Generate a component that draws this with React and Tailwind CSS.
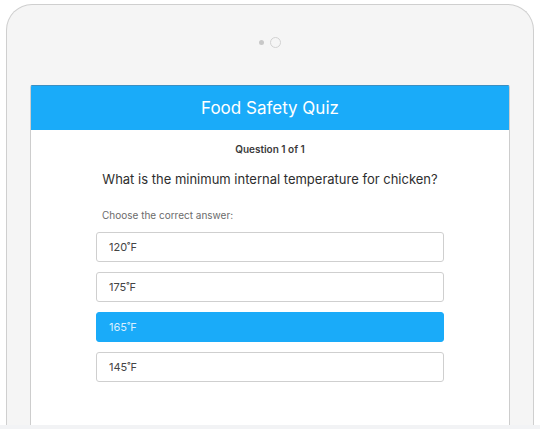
import { useState } from 'react'

const answers = ['120˚F', '175˚F', '165˚F', '145˚F']

export default function App() {
  const [picked, setPicked] = useState(2)

  return (
    <div
      className="w-[540px] h-[429px] bg-white overflow-hidden flex flex-col"
      style={{ fontFamily: 'Inter, "Noto Sans", sans-serif' }}
    >
      <div className="flex-1 pt-[4px] px-[6px] min-h-0">
        <div className="h-full bg-[#f5f5f5] border-[1.5px] border-b-0 border-[#cfcfcf] rounded-t-[26px] px-[23px] flex flex-col">
          {/* camera */}
          <div className="h-[80px] flex items-center justify-center gap-[6px] pb-[6px]">
            <span className="w-[5px] h-[5px] rounded-full bg-[#c8c8c8]" />
            <span className="w-[11px] h-[11px] rounded-full border border-[#d2d2d2]" />
          </div>

          {/* screen */}
          <div className="flex-1 flex flex-col bg-white border-x-[1.5px] border-[#cdcdcd] rounded-t-[2px] overflow-hidden">
            <header className="h-[45px] shrink-0 bg-[#1aabf9] border-t border-[#3b8fc2] flex items-center justify-center">
              <h1 className="text-white text-[17px] leading-none">Food Safety Quiz</h1>
            </header>

            <div className="px-[65px] pt-[12px]">
              <p className="text-center text-[10px] font-semibold text-[#3a3a3a] leading-[14px]">
                Question 1 of 1
              </p>
              <h2 className="text-center text-[13px] text-[#2e2e2e] leading-[18px] mt-[14px] whitespace-nowrap">
                What is the minimum internal temperature for chicken?
              </h2>
              <p className="text-[10px] text-[#6b6b6b] leading-[14px] mt-[20px] pl-[6px]">
                Choose the correct answer:
              </p>

              <div className="mt-[10px] flex flex-col gap-[10px]">
                {answers.map((a, i) => (
                  <button
                    key={a}
                    onClick={() => setPicked(i)}
                    className={`h-[30px] rounded-[3px] px-[12px] text-left text-[11px] ${
                      picked === i
                        ? 'bg-[#1aabf9] border border-[#1aabf9] text-[#d8efff]'
                        : 'bg-white border border-[#cfcfcf] text-[#444]'
                    }`}
                  >
                    {a}
                  </button>
                ))}
              </div>
            </div>
          </div>
        </div>
      </div>
      <div className="h-[4px] shrink-0 bg-[#f2f3f5]" />
    </div>
  )
}
